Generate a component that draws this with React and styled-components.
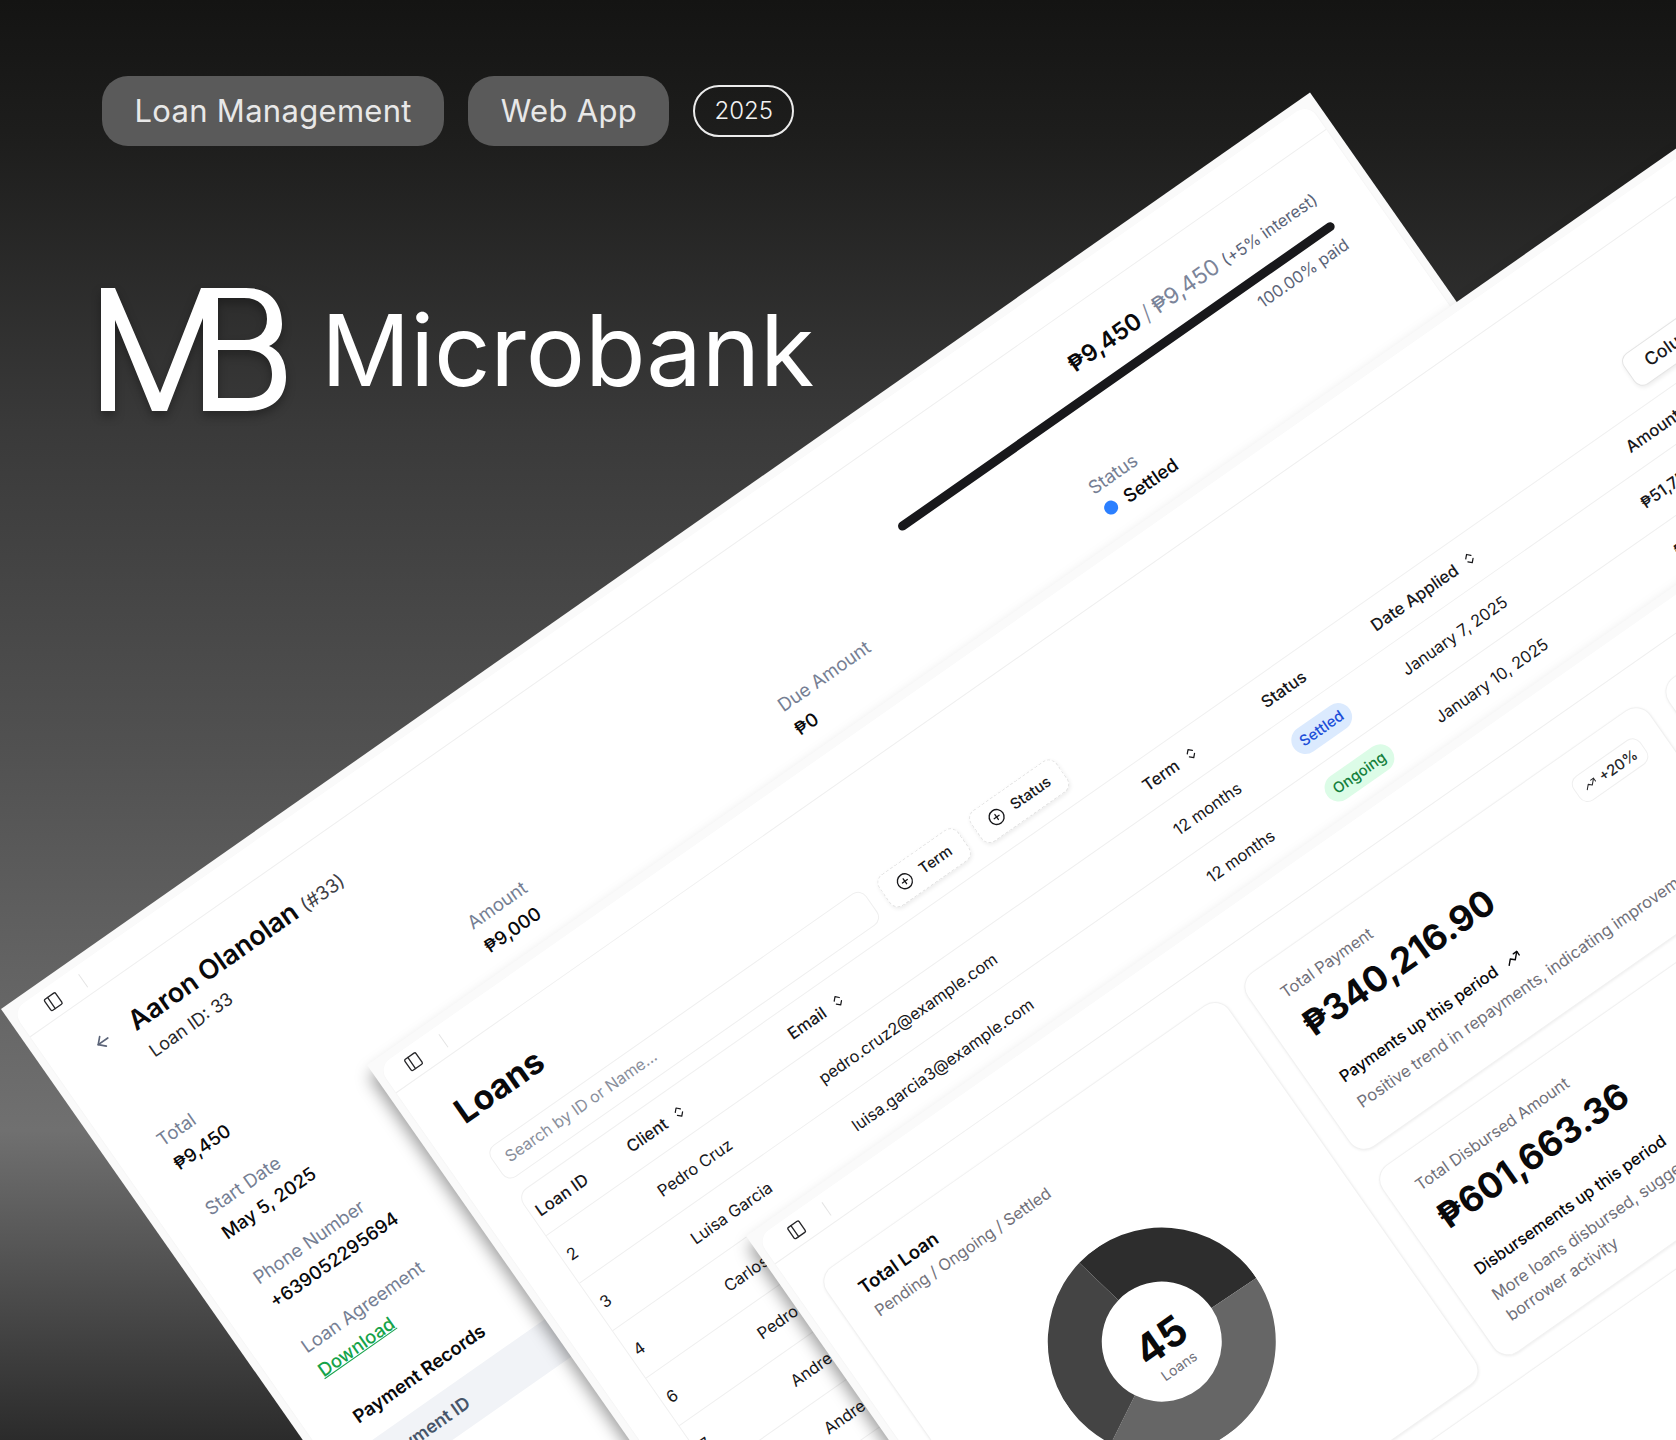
import styled, { createGlobalStyle } from "styled-components";
import { ArrowLeft, PanelLeft, CirclePlus, ChevronsUpDown, TrendingUp } from "lucide-react";

const GlobalStyle = createGlobalStyle`
  html, body {
    margin: 0;
    padding: 0;
    background: #141413;
  }
  * {
    box-sizing: border-box;
  }
`;

const loans = [
  { id: 2, client: "Pedro Cruz", email: "pedro.cruz2@example.com", status: "Settled", date: "January 7, 2025", amount: "₱51,750.00" },
  { id: 3, client: "Luisa Garcia", email: "luisa.garcia3@example.com", status: "Ongoing", date: "January 10, 2025", amount: "₱42,000.00" },
  { id: 4, client: "Carlos Reyes", email: "carlos.reyes4@example.com", status: "Ongoing", date: "January 12, 2025", amount: "₱36,750.00" },
  { id: 6, client: "Pedro Santos", email: "pedro.santos6@example.com", status: "Settled", date: "January 15, 2025", amount: "₱28,350.00" },
  { id: 7, client: "Andrea Lim", email: "andrea.lim7@example.com", status: "Settled", date: "January 18, 2025", amount: "₱21,000.00" },
  { id: 8, client: "Andres Tan", email: "andres.tan8@example.com", status: "Ongoing", date: "January 21, 2025", amount: "₱15,750.00" },
];

// angles are in the window's own frame, it gets rotated with the rest
const donut = [
  { from: -11.3, to: 91, color: "#2d2d2d" },
  { from: 91, to: 241.5, color: "#666666" },
  { from: 241.5, to: 348.7, color: "#444444" },
];

const arc = (from, to, r = 114, inner = 60) => {
  const pt = (a, rad) => {
    const t = ((a - 90) * Math.PI) / 180;
    return `${114 + rad * Math.cos(t)} ${114 + rad * Math.sin(t)}`;
  };
  const large = to - from > 180 ? 1 : 0;
  return `M${pt(from, r)} A${r} ${r} 0 ${large} 1 ${pt(to, r)} L${pt(to, inner)} A${inner} ${inner} 0 ${large} 0 ${pt(from, inner)} Z`;
};

const Bar = ({ iconLeft }) => (
  <TopBar $pad={iconLeft}>
    <PanelLeft size={18} strokeWidth={1.8} color="#27272a" />
    <BarDivider />
  </TopBar>
);

const SortHead = ({ children, indent }) => (
  <HeadCell $indent={indent}>
    {children}
    <ChevronsUpDown size={15} strokeWidth={2} />
  </HeadCell>
);

const Stat = ({ label, value, line, children, badge }) => (
  <StatCard>
    {badge && (
      <TrendBadge>
        <TrendingUp size={14} strokeWidth={1.8} />
        {badge}
      </TrendBadge>
    )}
    <StatLabel>{label}</StatLabel>
    <StatValue>{value}</StatValue>
    <StatLine>
      {line}
      <TrendingUp size={17} strokeWidth={2} />
    </StatLine>
    <StatNote>{children}</StatNote>
  </StatCard>
);

const App = () => {
  return (
    <>
      <GlobalStyle />
      <Page>
        <Tags>
          <Tag>Loan Management</Tag>
          <Tag>Web App</Tag>
          <Year>2025</Year>
        </Tags>
        <Brand>
          <Logo viewBox="0 0 186 124" width="186" height="124">
            <path d="M0 0H14L59 105L100 0H117V123H102V30L66 123H51L14 32V123H0Z" fill="#fff" />
            <path
              fillRule="evenodd"
              d="M102 0H145C168 0 181 14 181 36C181 48 175 55 168 58C178 62 185 72 185 89C185 111 170 123 146 123H102ZM117 10V52H143C158 52 166 44 166 31C166 18 158 10 143 10ZM117 62V110H145C162 110 171 102 171 86C171 71 162 62 145 62Z"
              fill="#fff"
            />
          </Logo>
          <BrandName>Microbank</BrandName>
        </Brand>

        <Window $left={1} $top={1009} $width={1598} $height={760}>
          <Panel>
            <Bar iconLeft={30} />
            <DetailBody>
              <DetailTop>
                <TitleGroup>
                  <ArrowLeft size={20} strokeWidth={2} color="#5b6478" />
                  <div>
                    <Borrower>
                      Aaron Olanolan <small>(#33)</small>
                    </Borrower>
                    <LoanId>Loan ID: 33</LoanId>
                  </div>
                </TitleGroup>
                <Progress>
                  <Paid>
                    <b>₱9,450</b>
                    <Slash>/</Slash>₱9,450 <small>(+5% interest)</small>
                  </Paid>
                  <Track />
                  <PaidPercent>100.00% paid</PaidPercent>
                </Progress>
              </DetailTop>
              <Fields>
                <FieldColumn>
                  <Field>
                    <FieldLabel>Total</FieldLabel>
                    <FieldValue>₱9,450</FieldValue>
                  </Field>
                  <Field>
                    <FieldLabel>Start Date</FieldLabel>
                    <FieldValue>May 5, 2025</FieldValue>
                  </Field>
                  <Field>
                    <FieldLabel>Phone Number</FieldLabel>
                    <FieldValue>+639052295694</FieldValue>
                  </Field>
                  <Field>
                    <FieldLabel>Loan Agreement</FieldLabel>
                    <Download>Download</Download>
                  </Field>
                </FieldColumn>
                <FieldColumn>
                  <Field>
                    <FieldLabel>Amount</FieldLabel>
                    <FieldValue>₱9,000</FieldValue>
                  </Field>
                </FieldColumn>
                <FieldColumn>
                  <Field>
                    <FieldLabel>Due Amount</FieldLabel>
                    <FieldValue>₱0</FieldValue>
                  </Field>
                </FieldColumn>
                <FieldColumn>
                  <Field>
                    <FieldLabel>Status</FieldLabel>
                    <StatusValue>
                      <Dot />
                      Settled
                    </StatusValue>
                  </Field>
                </FieldColumn>
              </Fields>
              <RecordsTitle>Payment Records</RecordsTitle>
              <RecordsHead>Payment ID</RecordsHead>
            </DetailBody>
          </Panel>
        </Window>

        <Window $left={367} $top={1065} $width={1610} $height={760} $raised>
          <Panel>
            <Bar iconLeft={23} />
            <LoansBody>
              <LoansTitle>Loans</LoansTitle>
              <Filters>
                <Search>Search by ID or Name...</Search>
                <FilterButton>
                  <CirclePlus size={18} strokeWidth={1.8} />
                  Term
                </FilterButton>
                <FilterButton>
                  <CirclePlus size={18} strokeWidth={1.8} />
                  Status
                </FilterButton>
                <ColumnsButton>Columns</ColumnsButton>
              </Filters>
              <Table>
                <TableRow $head>
                  <HeadCell>Loan ID</HeadCell>
                  <SortHead>Client</SortHead>
                  <SortHead>Email</SortHead>
                  <SortHead>Term</SortHead>
                  <HeadCell>Status</HeadCell>
                  <SortHead>Date Applied</SortHead>
                  <SortHead indent={20}>Amount</SortHead>
                </TableRow>
                {loans.map((loan) => (
                  <TableRow key={loan.id}>
                    <Cell>{loan.id}</Cell>
                    <Cell>{loan.client}</Cell>
                    <Cell>{loan.email}</Cell>
                    <Cell>12 months</Cell>
                    <Cell>
                      <StatusBadge $status={loan.status}>{loan.status}</StatusBadge>
                    </Cell>
                    <Cell>{loan.date}</Cell>
                    <AmountCell>{loan.amount}</AmountCell>
                  </TableRow>
                ))}
              </Table>
            </LoansBody>
          </Panel>
        </Window>

        <Window $left={746} $top={1236} $width={1300} $height={900} $raised>
          <Panel>
            <Bar iconLeft={28} />
            <Dashboard>
              <ChartCard>
                <ChartTitle>Total Loan</ChartTitle>
                <ChartSub>Pending / Ongoing / Settled</ChartSub>
                <Chart>
                  <svg width="228" height="228" viewBox="0 0 228 228">
                    {donut.map((s) => (
                      <path key={s.color} d={arc(s.from, s.to)} fill={s.color} />
                    ))}
                  </svg>
                  <ChartCenter>
                    <strong>45</strong>
                    <span>Loans</span>
                  </ChartCenter>
                </Chart>
              </ChartCard>
              <Stat label="Total Payment" value="₱340,216.90" line="Payments up this period" badge="+20%">
                Positive trend in repayments, indicating improvement
              </Stat>
              <SideCard />
              <Stat label="Total Disbursed Amount" value="₱601,663.36" line="Disbursements up this period" badge="+12%">
                More loans disbursed, suggesting growing demand and borrower activity
              </Stat>
              <WideCard />
            </Dashboard>
          </Panel>
        </Window>
      </Page>
    </>
  );
};

const Page = styled.div`
  position: relative;
  width: 1676px;
  height: 1440px;
  overflow: hidden;
  padding: 76px 0 0 102px;
  font-family: Inter, "Liberation Sans", sans-serif;
  background: linear-gradient(180deg, #141413 0%, #1e1e1d 10%, #3a3a3a 30%, #515151 52%, #707070 78.5%, #2b2b2b 100%);
`;

const Tags = styled.div`
  display: flex;
  align-items: center;
  gap: 24px;
`;

const Tag = styled.span`
  height: 70px;
  padding: 0 32.5px;
  border-radius: 26px;
  background: #5a5a5a;
  color: #e8e8e8;
  font-size: 31px;
  line-height: 70px;
  letter-spacing: 0.3px;
`;

const Year = styled.span`
  height: 52px;
  padding: 0 19px;
  border-radius: 26px;
  border: 2px solid #ececec;
  color: #f2f2f2;
  font-size: 24px;
  font-weight: 300;
  line-height: 48px;
`;

const Brand = styled.div`
  display: flex;
  align-items: center;
  gap: 34px;
  margin: 142px 0 0 -1px;
`;

const Logo = styled.svg`
  flex: none;
  filter: drop-shadow(0 5px 5px rgba(0, 0, 0, 0.3));
`;

const BrandName = styled.span`
  color: #fff;
  font-size: 99px;
  line-height: 124px;
  letter-spacing: -0.2px;
`;

const Window = styled.section`
  position: absolute;
  left: ${(p) => p.$left}px;
  top: ${(p) => p.$top}px;
  width: ${(p) => p.$width}px;
  height: ${(p) => p.$height}px;
  padding: 8px;
  background: #fafafa;
  transform: rotate(-35deg);
  transform-origin: 0 0;
  box-shadow: ${(p) => (p.$raised ? "-5px 10px 16px rgba(0, 0, 0, 0.38)" : "none")};
`;

const Panel = styled.div`
  height: 100%;
  background: #fff;
  border-radius: 14px;
  box-shadow: 0 1px 2px rgba(0, 0, 0, 0.05);
`;

const TopBar = styled.div`
  display: flex;
  align-items: center;
  gap: 27px;
  height: 32px;
  padding-left: ${(p) => p.$pad}px;
  border-bottom: 1px solid #efefef;
`;

const BarDivider = styled.span`
  width: 1px;
  height: 16px;
  background: #e4e4e4;
`;

const DetailBody = styled.div`
  padding: 29px 48px 0 47px;
`;

const DetailTop = styled.div`
  display: flex;
  justify-content: space-between;
`;

const TitleGroup = styled.div`
  display: flex;
  align-items: flex-start;
  gap: 23px;
  padding-top: 5px;

  svg {
    margin-top: 1px;
  }

  > div {
    margin-top: -2px;
  }
`;

const Borrower = styled.h1`
  margin: 0;
  color: #09090b;
  font-size: 27px;
  line-height: 30px;
  font-weight: 600;

  small {
    color: #3f3f46;
    font-size: 19px;
    font-weight: 400;
  }
`;

const LoanId = styled.div`
  margin-top: 5px;
  color: #27272a;
  font-size: 18px;
  line-height: 24px;
`;

const Progress = styled.div`
  width: 531px;
  padding-top: 3px;
  text-align: right;
`;

const Paid = styled.div`
  color: #7b8499;
  font-size: 22.5px;
  line-height: 30px;

  b {
    color: #09090b;
    font-size: 23.5px;
    font-weight: 600;
  }

  small {
    color: #5b6478;
    font-size: 16.5px;
  }
`;

const Slash = styled.span`
  margin: 0 5px;
  font-weight: 300;
`;

const Track = styled.div`
  height: 9px;
  margin-top: 13px;
  border-radius: 5px;
  background: #18181b;
`;

const PaidPercent = styled.div`
  margin-top: 8px;
  color: #5b6478;
  font-size: 16.5px;
  line-height: 20px;
`;

const Fields = styled.div`
  display: flex;
  margin: 33px 0 0 -2px;
`;

const FieldColumn = styled.div`
  display: flex;
  flex: none;
  flex-direction: column;
  gap: 31px;
  width: 379px;
`;

const Field = styled.div`
  display: flex;
  flex-direction: column;
  gap: 5px;
  font-size: 18.5px;
  line-height: 24px;
`;

const FieldLabel = styled.span`
  color: #767f94;
`;

const FieldValue = styled.span`
  color: #09090b;
  font-weight: 500;
`;

const Download = styled.a`
  color: #16a34a;
  font-weight: 500;
  text-decoration: underline;
`;

const StatusValue = styled.span`
  display: flex;
  align-items: center;
  gap: 10px;
  margin-top: -2px;
  color: #09090b;
  font-weight: 500;
`;

const Dot = styled.i`
  width: 14px;
  height: 14px;
  border-radius: 50%;
  background: #2b7fff;
`;

const RecordsTitle = styled.h2`
  margin: 34px 0 16px;
  color: #09090b;
  font-size: 18.5px;
  line-height: 24px;
  font-weight: 600;
`;

const RecordsHead = styled.div`
  height: 46px;
  padding-left: 4px;
  background: #f1f3f7;
  color: #475569;
  font-size: 18px;
  line-height: 46px;
  font-weight: 600;
`;

const LoansBody = styled.div`
  padding: 33px 40px 0;
`;

const LoansTitle = styled.h1`
  margin: 0 0 0 -2px;
  color: #09090b;
  font-size: 34px;
  line-height: 40px;
  font-weight: 700;
`;

const Filters = styled.div`
  display: flex;
  align-items: center;
  gap: 15px;
  margin-top: 25px;
`;

const Search = styled.div`
  width: 458px;
  height: 39px;
  padding-left: 12px;
  border: 1px solid #efefef;
  border-radius: 10px;
  color: #8a8f9c;
  font-size: 16.2px;
  line-height: 35px;
`;

const FilterButton = styled.button`
  display: flex;
  align-items: center;
  gap: 10px;
  height: 38px;
  padding: 0 15px;
  border: 1px dashed #e4e4e4;
  border-radius: 10px;
  background: #fff;
  box-shadow: 0 2px 4px rgba(0, 0, 0, 0.08);
  color: #18181b;
  font: 500 15px Inter, "Liberation Sans", sans-serif;
`;

const ColumnsButton = styled(FilterButton)`
  margin-left: auto;
  padding: 0 34px 0 20px;
  border-style: solid;
  font-size: 18px;
`;

const Table = styled.div`
  margin-top: 15px;
  border: 1px solid #f0f0f0;
  border-radius: 12px;
`;

const TableRow = styled.div`
  display: grid;
  grid-template-columns: 111px 197px 433px 145px 134px 291px 1fr;
  align-items: center;
  height: ${(p) => (p.$head ? 49 : 58)}px;
  padding-left: 6px;
  border-top: ${(p) => (p.$head ? "none" : "1px solid #efefef")};
`;

const HeadCell = styled.div`
  display: flex;
  align-items: center;
  gap: 9px;
  margin-left: ${(p) => p.$indent || 0}px;
  color: #18181b;
  font-size: 16.7px;
  font-weight: 500;
`;

const Cell = styled.div`
  color: #18181b;
  font-size: 16.4px;
`;

const AmountCell = styled(Cell)`
  font-weight: 500;
`;

const StatusBadge = styled.span`
  display: inline-block;
  height: 28px;
  padding: 0 9px;
  border-radius: 14px;
  background: ${(p) => (p.$status === "Settled" ? "#dbeafe" : "#dcfce7")};
  color: ${(p) => (p.$status === "Settled" ? "#1d4ed8" : "#15803d")};
  font-size: 15px;
  line-height: 28px;
  font-weight: 500;
`;

const Dashboard = styled.div`
  display: grid;
  grid-template-columns: 492px 492px 1fr;
  grid-template-rows: 213px 229px 300px;
  gap: 22px;
  padding: 34px 0 0 26px;
`;

const cardStyle = `
  border: 1px solid #f1f1f1;
  border-radius: 18px;
  background: #fff;
  box-shadow: 0 1px 3px rgba(0, 0, 0, 0.07);
`;

const ChartCard = styled.div`
  ${cardStyle}
  grid-row: span 2;
  display: flex;
  flex-direction: column;
  padding: 22px 28px 0;
`;

const ChartTitle = styled.div`
  color: #09090b;
  font-size: 18.5px;
  line-height: 24px;
  font-weight: 600;
`;

const ChartSub = styled.div`
  margin-top: 3px;
  color: #71717a;
  font-size: 16.2px;
  line-height: 26px;
`;

const Chart = styled.div`
  position: relative;
  align-self: center;
  width: 228px;
  height: 228px;
  margin-top: 61px;

  svg {
    display: block;
  }
`;

const ChartCenter = styled.div`
  position: absolute;
  inset: 0;
  display: flex;
  flex-direction: column;
  align-items: center;
  justify-content: center;
  padding-top: 14px;

  strong {
    color: #09090b;
    font-size: 41px;
    line-height: 46px;
    font-weight: 700;
  }

  span {
    color: #71717a;
    font-size: 14px;
    line-height: 18px;
  }
`;

const StatCard = styled.div`
  ${cardStyle}
  position: relative;
  padding: 23px 24px 0 29px;
`;

const TrendBadge = styled.span`
  position: absolute;
  top: 24px;
  right: 23px;
  display: flex;
  align-items: center;
  gap: 5px;
  height: 30px;
  padding: 0 9px;
  border: 1px solid #efefef;
  border-radius: 10px;
  color: #27272a;
  font-size: 15px;
  font-weight: 500;
`;

const StatLabel = styled.div`
  color: #71717a;
  font-size: 16.2px;
  line-height: 22px;
`;

const StatValue = styled.div`
  margin-top: 8px;
  color: #09090b;
  font-size: 35.7px;
  line-height: 44px;
  font-weight: 700;
`;

const StatLine = styled.div`
  display: flex;
  align-items: center;
  gap: 12px;
  margin-top: 28px;
  color: #09090b;
  font-size: 16.4px;
  line-height: 24px;
  font-weight: 500;
`;

const StatNote = styled.div`
  margin-top: 7px;
  color: #71717a;
  font-size: 16.5px;
  line-height: 25px;
`;

const SideCard = styled.div`
  ${cardStyle}
  grid-row: span 2;
`;

const WideCard = styled.div`
  ${cardStyle}
  grid-column: 1 / span 3;
`;

export default App;
